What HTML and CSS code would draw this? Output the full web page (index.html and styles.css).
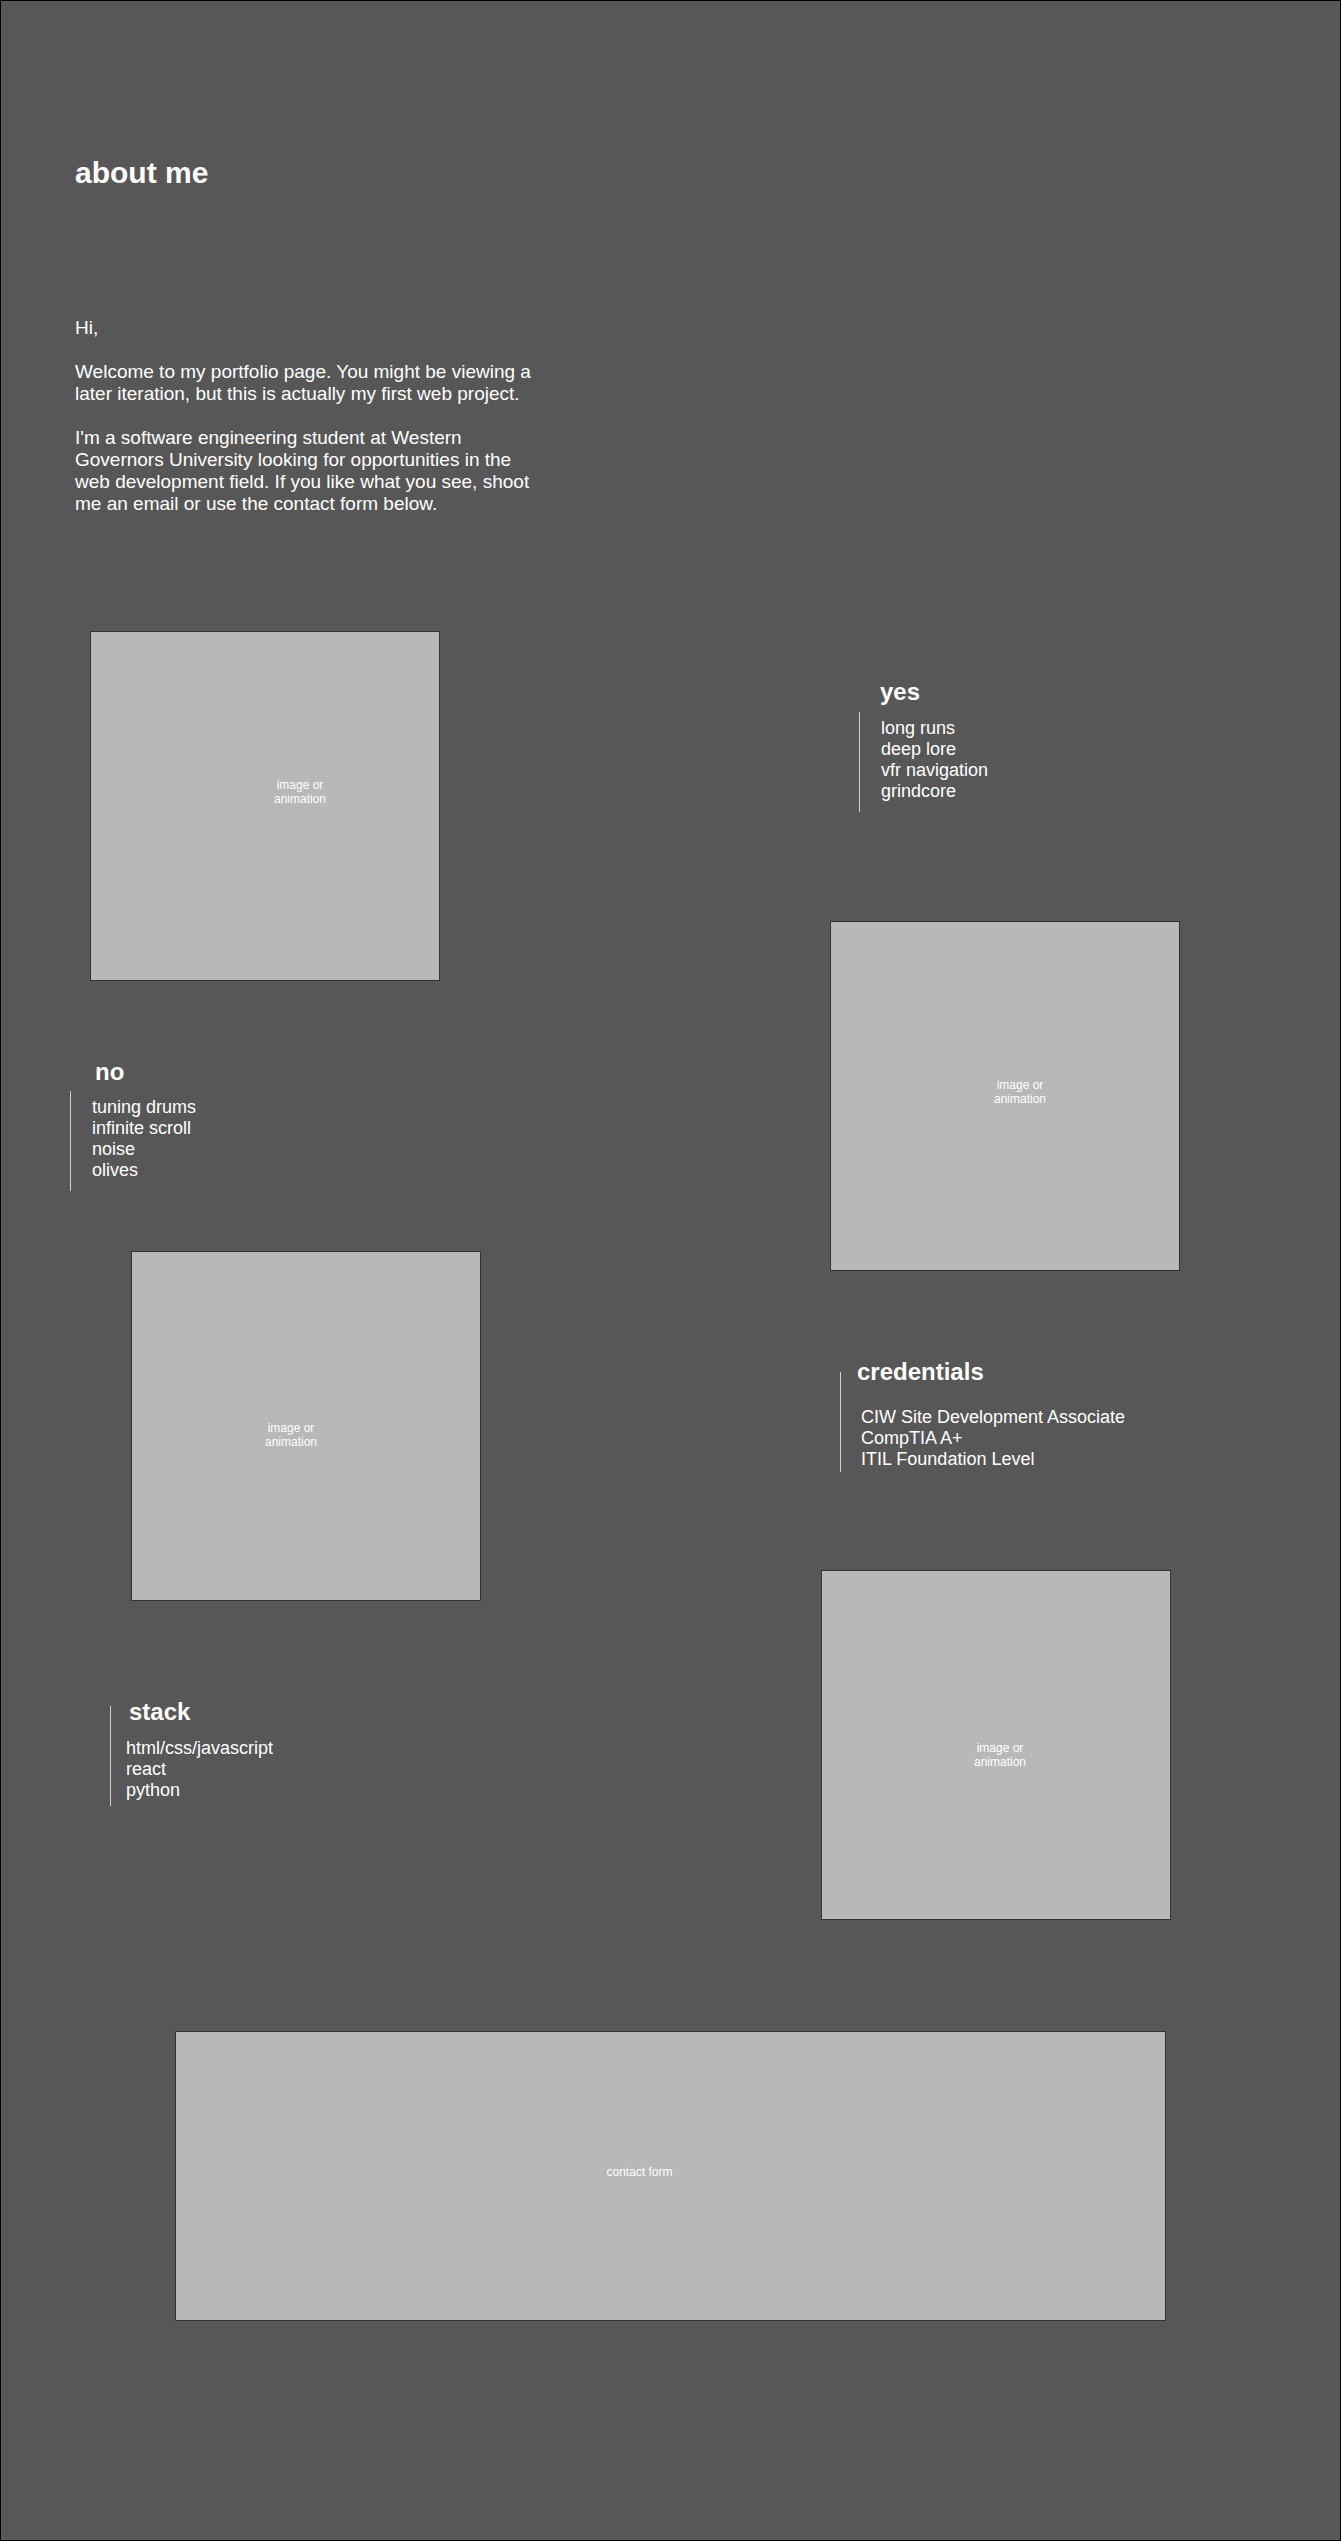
FILE: index.html
```html
<!DOCTYPE html>
<html lang="en">
<head>
  <meta charset="UTF-8" />
  <meta name="viewport" content="width=device-width, initial-scale=1.0"/>
  <title>about me</title>
  <link rel="stylesheet" href="styles.css">
</head>
<body>
  <div class="frame">
    <div class="intro">
      <h1>about me</h1>
      <div class="intro-text">
        <p>Hi,</p>
        <p>Welcome to my portfolio page. You might be viewing a later iteration, but this is actually my first web project.</p>
        <p>I'm a software engineering student at Western Governors University looking for opportunities in the web development field. If you like what you see, shoot me an email or use the contact form below.</p>
      </div>
    </div>

    <div class="board">
      <div class="col col-left">
        <div class="media media-a"><span>image or<br>animation</span></div>

        <div class="group group-no">
          <h2>no</h2>
          <ul class="bracket">
            <li>tuning drums</li>
            <li>infinite scroll</li>
            <li>noise</li>
            <li>olives</li>
          </ul>
        </div>

        <div class="media media-c"><span>image or<br>animation</span></div>

        <div class="bracket group-stack">
          <h2>stack</h2>
          <ul>
            <li>html/css/javascript</li>
            <li>react</li>
            <li>python</li>
          </ul>
        </div>
      </div>

      <div class="col col-right">
        <div class="group group-yes">
          <h2>yes</h2>
          <ul class="bracket">
            <li>long runs</li>
            <li>deep lore</li>
            <li>vfr navigation</li>
            <li>grindcore</li>
          </ul>
        </div>

        <div class="media media-b"><span>image or<br>animation</span></div>

        <div class="bracket group-creds">
          <h2>credentials</h2>
          <ul>
            <li>CIW Site Development Associate</li>
            <li>CompTIA A+</li>
            <li>ITIL Foundation Level</li>
          </ul>
        </div>

        <div class="media media-d"><span>image or<br>animation</span></div>
      </div>
    </div>

    <div class="contact"><span>contact form</span></div>
  </div>
</body>
</html>
```

FILE: styles.css
```css
* {
  box-sizing: border-box;
}
body {
  margin: 0;
  font-family: "Liberation Sans", Arial, sans-serif;
  color: white;
  background: #575757;
}
.frame {
  width: 1341px;
  height: 2541px;
  border: 1px solid #000;
  background: #575757;
}
.intro {
  padding-left: 74px;
}
h1 {
  margin: 155px 0 0;
  font-size: 30px;
  font-weight: bold;
  line-height: 34px;
}
.intro-text {
  width: 465px;
  margin-top: 127px;
  font-size: 19px;
  line-height: 22px;
}
.intro-text p {
  margin: 0 0 22px;
}
.intro-text p:last-child {
  margin-bottom: 0;
}

.board {
  display: grid;
  grid-template-columns: 670px 1fr;
  margin-top: 86px;
}
.col {
  display: flex;
  flex-direction: column;
  align-items: flex-start;
}

/* placeholder boxes */
.media {
  width: 350px;
  height: 350px;
  background: #b8b8b8;
  border: 1px solid #333;
  display: flex;
  align-items: center;
  justify-content: center;
  text-align: center;
  font-size: 12px;
  line-height: 14px;
}
.media-a { margin: 30px 0 0 89px; }
.media-a span { transform: translate(35px, -14px); }
.media-b { margin: 109px 0 0 159px; }
.media-b span { transform: translate(15px, -4px); }
.media-c { margin: 60px 0 0 130px; }
.media-c span { transform: translate(-15px, 9px); }
.media-d { margin: 98px 0 0 150px; }
.media-d span { transform: translate(4px, 10px); }

/* headings + lists */
h2 {
  margin: 0;
  font-size: 24px;
  font-weight: bold;
  line-height: 28px;
}
ul {
  list-style: none;
  margin: 0;
  padding: 0;
  font-size: 18px;
}
.bracket {
  border-left: 1px solid #d0d0d0;
  height: 100px;
}
.group .bracket {
  padding-top: 6px;
  padding-left: 21px;
}
.group h2 {
  margin-bottom: 5px;
}

.group-yes {
  margin: 77px 0 0 188px;
}
.group-yes h2 {
  padding-left: 21px;
  margin-bottom: 6px;
}
.group-no {
  margin: 77px 0 0 69px;
}
.group-no h2 {
  padding-left: 25px;
}

.group-creds {
  margin: 101px 0 0 169px;
}
.group-creds h2 {
  margin-top: -14px;
  padding-left: 16px;
}
.group-creds ul {
  margin-top: 21px;
  padding-left: 20px;
}

.group-stack {
  margin: 105px 0 0 109px;
}
.group-stack h2 {
  margin-top: -8px;
  padding-left: 18px;
}
.group-stack ul {
  margin-top: 12px;
  padding-left: 15px;
}

.contact {
  width: 991px;
  height: 290px;
  margin: 111px 0 0 174px;
  background: #b8b8b8;
  border: 1px solid #333;
  display: flex;
  align-items: center;
  justify-content: center;
  font-size: 12px;
}
.contact span {
  transform: translate(-31px, -4px);
}
```
